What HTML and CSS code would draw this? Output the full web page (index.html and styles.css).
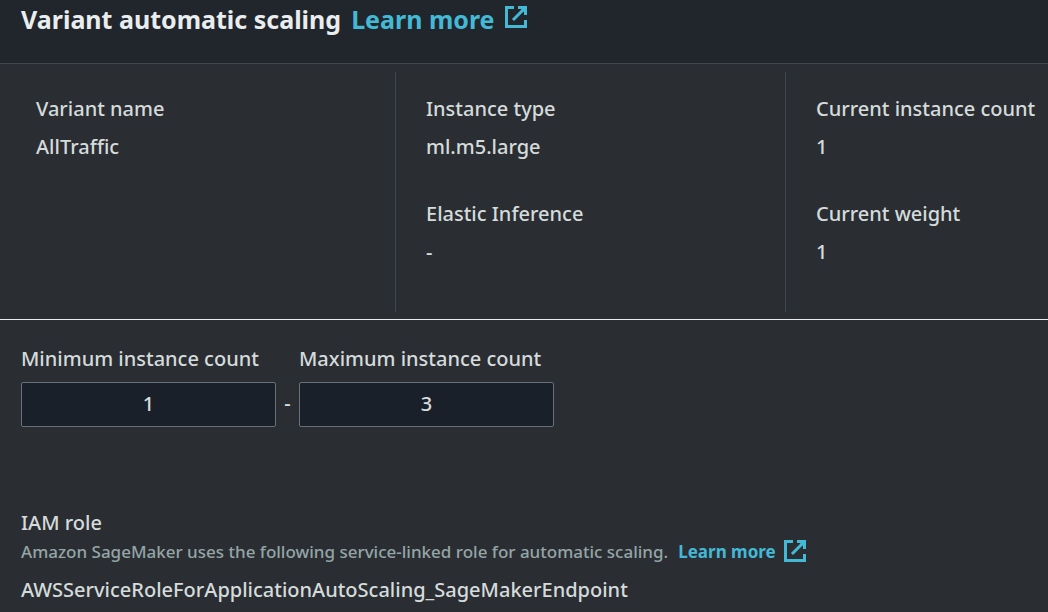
FILE: index.html
```html
<!DOCTYPE html>
<html lang="en">
<head>
<meta charset="utf-8">
<title>Variant automatic scaling</title>
<link rel="stylesheet" href="styles.css">
</head>
<body>
<header class="panel-header">
  <h1 class="title">Variant automatic scaling</h1>
  <a class="link link-large" href="#">Learn more
    <svg class="icon" viewBox="0 0 22 22" aria-hidden="true"><path d="M9 1.5H1.5v19h19V14M13 1.5h7.5V9M20 2L8 14M17 2l3 3"/></svg></a>
</header>
<main>
  <section class="details">
    <dl class="column">
      <div class="pair"><dt>Variant name</dt><dd>AllTraffic</dd></div>
    </dl>
    <dl class="column">
      <div class="pair"><dt>Instance type</dt><dd>ml.m5.large</dd></div>
      <div class="pair"><dt>Elastic Inference</dt><dd>-</dd></div>
    </dl>
    <dl class="column">
      <div class="pair"><dt>Current instance count</dt><dd>1</dd></div>
      <div class="pair"><dt>Current weight</dt><dd>1</dd></div>
    </dl>
  </section>
  <form class="settings">
    <div class="range">
      <div class="field">
        <label for="min-count">Minimum instance count</label>
        <input id="min-count" type="text" inputmode="numeric" value="1">
      </div>
      <span class="dash">-</span>
      <div class="field">
        <label for="max-count">Maximum instance count</label>
        <input id="max-count" type="text" inputmode="numeric" value="3">
      </div>
    </div>
    <section class="role">
      <h2 class="role-title">IAM role</h2>
      <div class="role-hint">
        <span>Amazon SageMaker uses the following service-linked role for automatic scaling.</span>
        <a class="link link-small" href="#">Learn more
          <svg class="icon" viewBox="0 0 22 22" aria-hidden="true"><path d="M9 1.5H1.5v19h19V14M13 1.5h7.5V9M20 2L8 14M17 2l3 3"/></svg></a>
      </div>
      <p class="role-name">AWSServiceRoleForApplicationAutoScaling_SageMakerEndpoint</p>
    </section>
  </form>
</main>
</body>
</html>
```
FILE: styles.css
```css
* { box-sizing: border-box; }
body {
  margin: 0;
  background: #2a2e33;
  color: #d5dbdb;
  font: 500 20px/30px "Noto Sans", sans-serif;
}
h1, h2, p, dl, dd { margin: 0; }
.panel-header {
  display: flex;
  gap: 10px;
  height: 64px;
  padding: 1px 21px;
  background: #21252c;
  border-bottom: 1px solid #414750;
  line-height: 36px;
}
.title { font-size: 25px; font-weight: 700; color: #eaeded; }
.link { display: flex; align-items: center; gap: 8px; color: #44b9d6; font-weight: 700; text-decoration: none; }
.link-large { gap: 10px; font-size: 25px; height: 36px; }
.link-small { font-size: 17px; }
.icon { width: 22px; height: 22px; fill: none; stroke: currentColor; stroke-width: 3; }
.link-large .icon { margin-bottom: 4px; }
.link-small .icon { margin-bottom: 2px; }
.details {
  display: grid;
  grid-template-columns: 395px 390px 1fr;
  padding: 8px 0 7px;
  border-bottom: 1px solid #eaeded;
}
.column { display: flex; flex-direction: column; gap: 37px; height: 240px; padding: 22px 0 0 30px; white-space: nowrap; }
.column:first-child { padding-left: 36px; }
.column + .column { border-left: 1px solid #414750; }
.pair { display: grid; gap: 8px; }
.settings { padding: 24px 21px 0; }
.range { display: flex; align-items: flex-end; }
.field { display: grid; gap: 8px; width: 255px; }
input {
  width: 100%;
  height: 45px;
  padding: 0 2px 2px;
  border: 1px solid #687078;
  border-radius: 2px;
  background: #1a2029;
  color: #d5dbdb;
  font: inherit;
  text-align: center;
}
.dash { width: 23px; padding-bottom: 2px; line-height: 45px; text-align: center; }
.role { margin-top: 81px; }
.role-title { font-size: 20px; font-weight: 500; }
.role-hint { display: flex; gap: 10px; color: #95a5a6; font-size: 17px; line-height: 28px; white-space: nowrap; }
.role-name { margin-top: 9px; }
```
